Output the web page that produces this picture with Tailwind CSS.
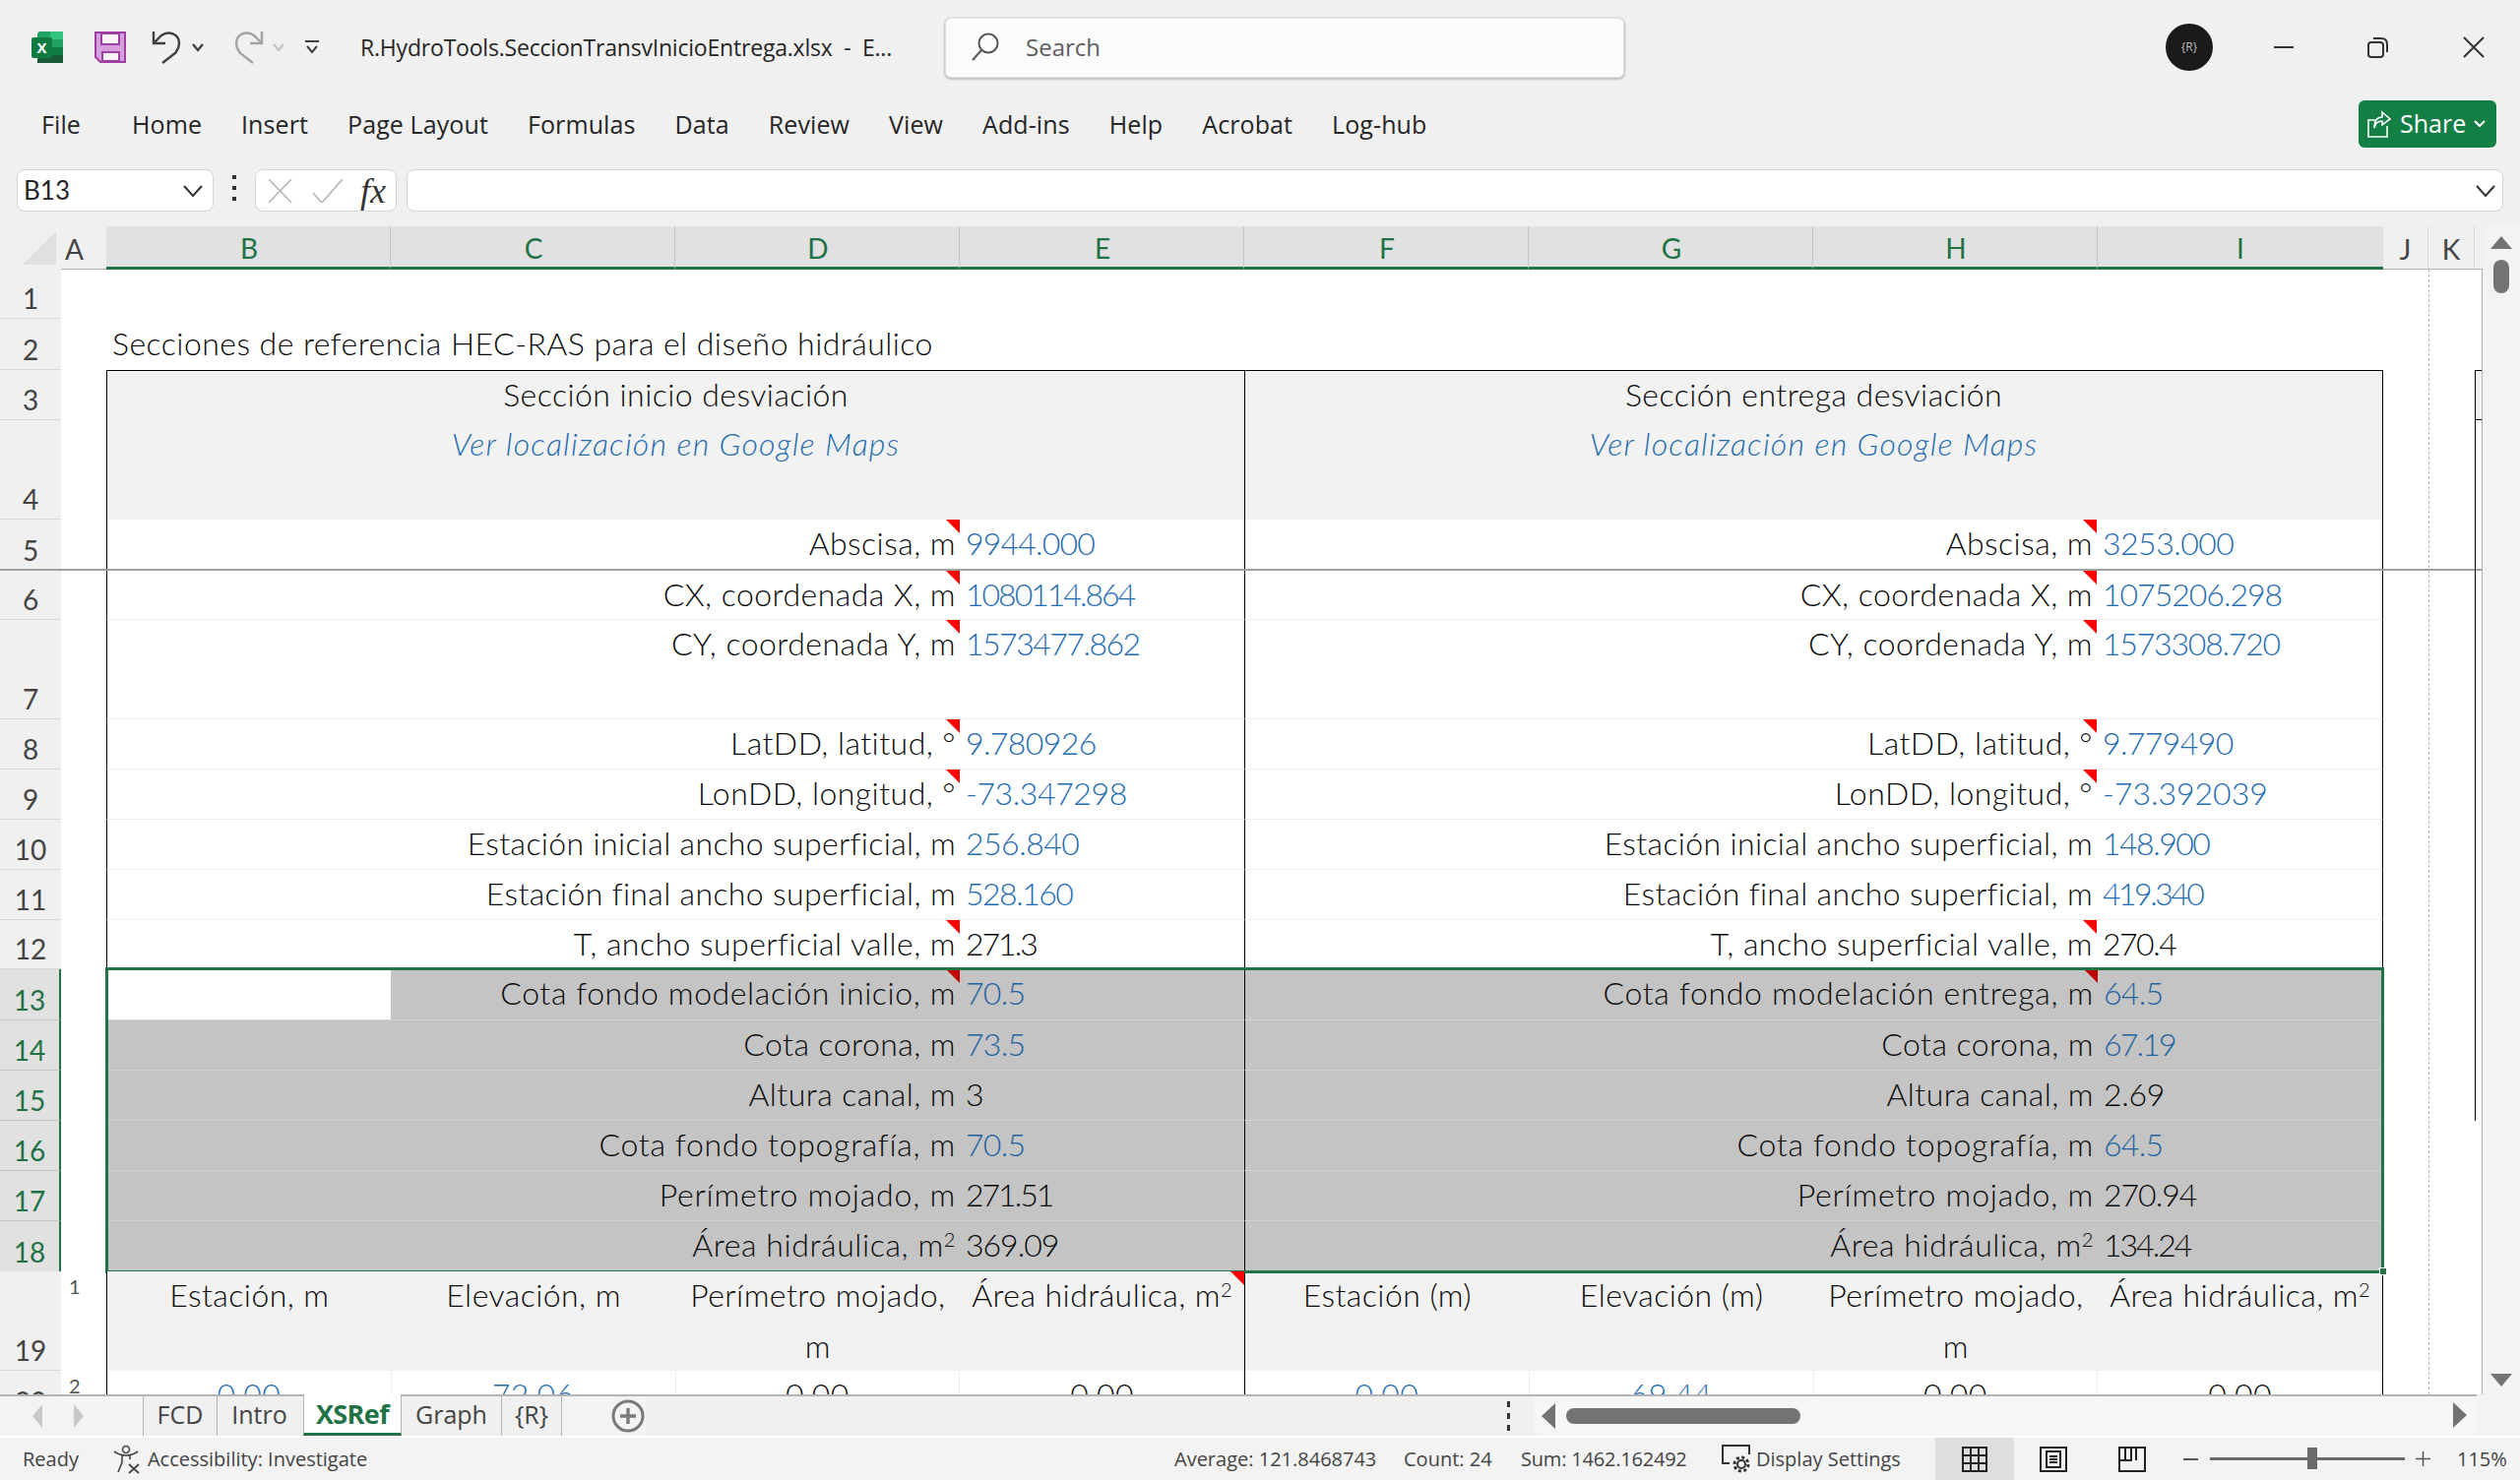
<!DOCTYPE html>
<html><head><meta charset="utf-8">
<script src="https://cdn.jsdelivr.net/npm/@tailwindcss/browser@4"></script>
</head>
<body class="w-[2560px] h-[1504px] overflow-hidden bg-[#f0f0f0] font-['Open_Sans',sans-serif] text-[#262626]">

<!-- Title bar -->
<div class="flex items-center h-[96px] relative">
  <svg class="ml-[32px]" width="32" height="32" viewBox="0 0 32 32"><path d="M9 0H29Q32 0 32 3V29Q32 32 29 32H9Q6 32 6 29V3Q6 0 9 0Z" fill="#21a366"/><rect x="19" y="0" width="13" height="8" fill="#33c481"/><rect x="6" y="16" width="13" height="8" fill="#107c41"/><rect x="19" y="8" width="13" height="8" fill="#21a366"/><rect x="19" y="16" width="13" height="8" fill="#107c41"/><rect x="6" y="24" width="26" height="8" fill="#185c37"/><rect x="0" y="6" width="21" height="21" rx="2" fill="#107c41"/><text x="10.5" y="22" font-size="15" font-weight="700" fill="#fff" text-anchor="middle" font-family="Open Sans">X</text></svg>
  <svg class="ml-[32px]" width="32" height="32" viewBox="0 0 32 32"><path d="M1 1H31V31H6L1 26Z" fill="#d79fdb" stroke="#9f3fa3" stroke-width="2"/><rect x="7" y="2" width="18" height="11" fill="#f9f2fa" stroke="#9f3fa3" stroke-width="2"/><rect x="8" y="21" width="17" height="9" fill="#f9f2fa" stroke="#9f3fa3" stroke-width="2"/></svg>
  <svg class="ml-[26px]" width="32" height="34" viewBox="0 0 32 34" fill="none" stroke="#404040" stroke-width="2.4"><path d="M2 1V13H14"/><path d="M2 13L10 5C17 0 28 3 28 13C28 18 26 20 24 23L11 33"/></svg>
  <svg class="ml-[8px]" width="14" height="10" viewBox="0 0 14 10" fill="none" stroke="#404040" stroke-width="2.4"><path d="M2 2L7 8L12 2"/></svg>
  <svg class="ml-[28px]" width="32" height="34" viewBox="0 0 32 34" fill="none" stroke="#a3a3a3" stroke-width="2.4"><path d="M30 1V13H18"/><path d="M30 13L22 5C15 0 4 3 4 13C4 18 6 20 8 23L21 33"/></svg>
  <svg class="ml-[8px]" width="14" height="10" viewBox="0 0 14 10" fill="none" stroke="#c4c4c4" stroke-width="2.4"><path d="M2 2L7 8L12 2"/></svg>
  <svg class="ml-[20px]" width="14" height="14" viewBox="0 0 14 14" fill="none" stroke="#404040" stroke-width="2"><path d="M0 1H14M2 6L7 12L12 6"/></svg>
  <div class="ml-[42px] w-[560px] text-[23px] tracking-[-0.2px] whitespace-pre">R.HydroTools.SeccionTransvInicioEntrega.xlsx  -  E...</div>
  <div class="ml-[34px] flex items-center w-[690px] h-[61px] bg-[#fbfbfb] rounded-[6px] border border-[#e0e0e0] shadow-[0_1px_2px_1px_rgba(0,0,0,0.2)]">
    <svg class="ml-[26px]" width="28" height="30" viewBox="0 0 28 30" fill="none" stroke="#555" stroke-width="2"><circle cx="17" cy="11" r="9.5"/><path d="M10 18L1 28"/></svg>
    <div class="ml-[27px] text-[24px] text-[#5e5e5e]">Search</div>
  </div>
  <div class="ml-[550px] flex items-center justify-center w-[48px] h-[48px] rounded-full bg-[#1a1a1a] text-[12px] text-[#bdbdbd]">{R}</div>
  <div class="ml-[62px] w-[20px] h-[2px] bg-[#333]"></div>
  <svg class="ml-[75px]" width="22" height="22" viewBox="0 0 22 22" fill="none" stroke="#333" stroke-width="2"><rect x="1" y="6" width="15" height="15" rx="3"/><path d="M6 2H14Q20 2 20 8V16"/></svg>
  <svg class="ml-[75px]" width="22" height="22" viewBox="0 0 22 22" fill="none" stroke="#333" stroke-width="2"><path d="M1 1L21 21M21 1L1 21"/></svg>
</div>

<!-- Menu -->
<div class="flex items-start h-[59px] pt-[4px] pl-[42px] text-[25px] tracking-[0.1px] relative">
  <div class="flex items-center gap-[40px] h-[54px]">
    <span class="mr-[12px]">File</span><span>Home</span><span>Insert</span><span>Page Layout</span><span>Formulas</span><span>Data</span><span>Review</span><span>View</span><span>Add-ins</span><span>Help</span><span>Acrobat</span><span>Log-hub</span>
  </div>
  <div class="absolute left-[2396px] top-[6px] flex items-center w-[140px] h-[48px] rounded-[6px] bg-[#137f45] text-white text-[25px] tracking-normal">
    <svg class="ml-[9px]" width="24" height="28" viewBox="0 0 24 28" fill="none" stroke="#fff" stroke-width="1.6"><path d="M8 10H1V27H20V16"/><path d="M15 2L23 9L15 15V11C11 11 8 13 7 18C7 11 10 7 15 7Z"/></svg>
    <span class="ml-[9px]">Share</span>
    <svg class="ml-[8px]" width="12" height="8" viewBox="0 0 12 8" fill="none" stroke="#fff" stroke-width="2"><path d="M1 1L6 6L11 1"/></svg>
  </div>
</div>

<!-- Formula bar -->
<div class="flex items-start h-[75px] pt-[17px]">
  <div class="ml-[17px] flex items-center w-[200px] h-[43px] bg-white border border-[#d4d4d4] rounded-[8px] font-['Lato',sans-serif] text-[26px]">
    <span class="ml-[6px] flex-1">B13</span>
    <svg class="mr-[10px]" width="20" height="12" viewBox="0 0 20 12" fill="none" stroke="#333" stroke-width="2"><path d="M1 1L10 11L19 1"/></svg>
  </div>
  <div class="ml-[19px] mt-[6px] flex flex-col gap-[7px]"><div class="w-[4px] h-[4px] bg-[#333]"></div><div class="w-[4px] h-[4px] bg-[#333]"></div><div class="w-[4px] h-[4px] bg-[#333]"></div></div>
  <div class="ml-[19px] flex items-center w-[144px] h-[43px] bg-white border border-[#d4d4d4] rounded-[8px]">
    <svg class="ml-[12px]" width="25" height="24" viewBox="0 0 25 24" fill="none" stroke="#b5b5b5" stroke-width="1.6"><path d="M1 0L24 24M24 0L1 24"/></svg>
    <svg class="ml-[20px]" width="32" height="24" viewBox="0 0 32 24" fill="none" stroke="#b5b5b5" stroke-width="1.6"><path d="M1 14L10 24L31 0"/></svg>
    <span class="ml-[17px] font-['Liberation_Serif',serif] italic text-[36px] text-[#333] leading-none">fx</span>
  </div>
  <div class="ml-[10px] flex items-center justify-end w-[2130px] h-[43px] bg-white border border-[#d4d4d4] rounded-[8px]">
    <svg class="mr-[7px]" width="20" height="12" viewBox="0 0 20 12" fill="none" stroke="#333" stroke-width="2"><path d="M1 1L10 11L19 1"/></svg>
  </div>
</div>

<!-- Sheet area -->
<div class="flex h-[1187px] font-['Lato',sans-serif] text-[32px] font-light tracking-[0.45px] text-[#0a0a0a]">
  <div class="w-[2522px] shrink-0 flex flex-col relative">
    <!-- Column headers -->
    <div class="flex h-[44px] shrink-0 font-normal text-[28px] tracking-normal">
      <div class="w-[62px] relative"><svg class="absolute left-[23px] top-[5px]" width="34" height="34" viewBox="0 0 34 34"><path d="M34 0V34H0Z" fill="#e0e0e0"/></svg></div>
      <div class="w-[46px] flex items-center pl-[4px] pt-[3px] text-[#444] border-b border-b-[#b0b0b0]">A</div>
      <div class="w-[289px] flex items-center justify-center pl-[2px] pt-[3px] bg-[#e1e1e1] text-[#217346] border-b-[3px] border-b-[#217346] border-r border-r-[#c4c4c4]">B</div>
      <div class="w-[289px] flex items-center justify-center pl-[2px] pt-[3px] bg-[#e1e1e1] text-[#217346] border-b-[3px] border-b-[#217346] border-r border-r-[#c4c4c4]">C</div>
      <div class="w-[289px] flex items-center justify-center pl-[2px] pt-[3px] bg-[#e1e1e1] text-[#217346] border-b-[3px] border-b-[#217346] border-r border-r-[#c4c4c4]">D</div>
      <div class="w-[289px] flex items-center justify-center pl-[2px] pt-[3px] bg-[#e1e1e1] text-[#217346] border-b-[3px] border-b-[#217346] border-r border-r-[#c4c4c4]">E</div>
      <div class="w-[289px] flex items-center justify-center pl-[2px] pt-[3px] bg-[#e1e1e1] text-[#217346] border-b-[3px] border-b-[#217346] border-r border-r-[#c4c4c4]">F</div>
      <div class="w-[289px] flex items-center justify-center pl-[2px] pt-[3px] bg-[#e1e1e1] text-[#217346] border-b-[3px] border-b-[#217346] border-r border-r-[#c4c4c4]">G</div>
      <div class="w-[289px] flex items-center justify-center pl-[2px] pt-[3px] bg-[#e1e1e1] text-[#217346] border-b-[3px] border-b-[#217346] border-r border-r-[#c4c4c4]">H</div>
      <div class="w-[290px] flex items-center justify-center pt-[3px] bg-[#e1e1e1] text-[#217346] border-b-[3px] border-b-[#217346]">I</div>
      <div class="w-[46px] flex items-center justify-center pt-[3px] text-[#444] border-r border-r-[#d8d8d8] border-b border-b-[#b0b0b0]">J</div>
      <div class="w-[47px] flex items-center justify-center pt-[3px] text-[#444] border-r border-r-[#d8d8d8] border-b border-b-[#b0b0b0]">K</div>
      <div class="w-[8px] border-b border-b-[#b0b0b0]"></div>
    </div>
    <!-- Rows -->
    <div class="h-[1143px] overflow-hidden bg-white border-r border-[#b0b0b0] leading-[48px] relative">
      <!-- page break -->
      <div class="absolute left-[2467px] top-0 bottom-0 w-0 border-l border-dashed border-[#b8b8b8]"></div>
      <!-- next block's edge, column L -->
      <div class="absolute left-[2514px] top-[102px] h-[763px] w-[7px] border-l border-black"></div>
      <div class="absolute left-[2515px] top-[102px] h-[51px] w-[6px] bg-[#f2f2f2] border-y border-black"></div>

      <div class="flex h-[50px]">
        <div class="w-[62px] shrink-0 bg-[#f0f0f0] border-b border-[#d8d8d8] flex items-end justify-center text-[28px] font-normal tracking-normal leading-[40px] text-[#444]">1</div>
      </div>
      <div class="flex h-[52px]">
        <div class="w-[62px] shrink-0 bg-[#f0f0f0] border-b border-[#d8d8d8] flex items-end justify-center text-[28px] font-normal tracking-normal leading-[40px] text-[#444]">2</div>
        <div class="w-[46px] shrink-0"></div>
        <div class="pl-[6px] whitespace-nowrap leading-[50px]">Secciones de referencia HEC-RAS para el diseño hidráulico</div>
      </div>
      <div class="flex h-[51px]">
        <div class="w-[62px] shrink-0 bg-[#f0f0f0] border-b border-[#d8d8d8] flex items-end justify-center text-[28px] font-normal tracking-normal leading-[40px] text-[#444]">3</div>
        <div class="w-[46px] shrink-0"></div>
        <div class="w-[1156px] shrink-0 text-center bg-[#f2f2f2] border-l border-t border-black">Sección inicio desviación</div>
        <div class="w-[1157px] shrink-0 text-center bg-[#f2f2f2] border-l border-t border-r border-black">Sección entrega desviación</div>
      </div>
      <div class="flex h-[101px]">
        <div class="w-[62px] shrink-0 bg-[#f0f0f0] border-b border-[#d8d8d8] flex items-end justify-center text-[28px] font-normal tracking-normal leading-[40px] text-[#444]">4</div>
        <div class="w-[46px] shrink-0"></div>
        <div class="w-[1156px] shrink-0 text-center bg-[#f2f2f2] border-l border-black italic tracking-[1.2px] text-[#1f6cb0]">Ver localización en Google Maps</div>
        <div class="w-[1157px] shrink-0 text-center bg-[#f2f2f2] border-l border-r border-black italic tracking-[1.2px] text-[#1f6cb0]">Ver localización en Google Maps</div>
      </div>

      <!-- row 5 -->
      <div class="flex h-[52px] border-b-2 border-[#a0a0a0] w-[2521px]">
        <div class="w-[62px] shrink-0 bg-[#f0f0f0] flex items-end justify-center text-[28px] font-normal tracking-normal leading-[38px] text-[#444]">5</div>
        <div class="w-[46px] shrink-0"></div>
        <div class="flex w-[1156px] shrink-0 border-l border-black">
          <div class="relative flex-1 text-right pr-[4px]">Abscisa, m<svg class="absolute right-0 top-0" width="14" height="14"><path d="M0 0H14V14Z" fill="#f00"/></svg></div>
          <div class="w-[289px] pl-[6px] text-[#1f6cb0] tracking-[-0.8px]">9944.000</div>
        </div>
        <div class="flex w-[1157px] shrink-0 border-l border-r border-black">
          <div class="relative flex-1 text-right pr-[4px]">Abscisa, m<svg class="absolute right-0 top-0" width="14" height="14"><path d="M0 0H14V14Z" fill="#f00"/></svg></div>
          <div class="w-[290px] pl-[6px] text-[#1f6cb0] tracking-[-0.5px]">3253.000</div>
        </div>
      </div>
      <!-- row 6 -->
      <div class="flex h-[50px]">
        <div class="w-[62px] shrink-0 bg-[#f0f0f0] border-b border-[#d8d8d8] flex items-end justify-center text-[28px] font-normal tracking-normal leading-[40px] text-[#444]">6</div>
        <div class="w-[46px] shrink-0"></div>
        <div class="flex w-[1156px] shrink-0 border-l border-b border-l-black border-b-[#eeeeee]">
          <div class="relative flex-1 text-right pr-[4px]">CX, coordenada X, m<svg class="absolute right-0 top-0" width="14" height="14"><path d="M0 0H14V14Z" fill="#f00"/></svg></div>
          <div class="w-[289px] pl-[6px] text-[#1f6cb0] tracking-[-2px]">1080114.864</div>
        </div>
        <div class="flex w-[1157px] shrink-0 border-l border-r border-b border-l-black border-r-black border-b-[#eeeeee]">
          <div class="relative flex-1 text-right pr-[4px]">CX, coordenada X, m<svg class="absolute right-0 top-0" width="14" height="14"><path d="M0 0H14V14Z" fill="#f00"/></svg></div>
          <div class="w-[290px] pl-[6px] text-[#1f6cb0] tracking-[-1px]">1075206.298</div>
        </div>
      </div>
      <!-- row 7 -->
      <div class="flex h-[101px]">
        <div class="w-[62px] shrink-0 bg-[#f0f0f0] border-b border-[#d8d8d8] flex items-end justify-center text-[28px] font-normal tracking-normal leading-[40px] text-[#444]">7</div>
        <div class="w-[46px] shrink-0"></div>
        <div class="flex w-[1156px] shrink-0 border-l border-b border-l-black border-b-[#eeeeee]">
          <div class="relative flex-1 text-right pr-[4px]">CY, coordenada Y, m<svg class="absolute right-0 top-0" width="14" height="14"><path d="M0 0H14V14Z" fill="#f00"/></svg></div>
          <div class="w-[289px] pl-[6px] text-[#1f6cb0] tracking-[-1.5px]">1573477.862</div>
        </div>
        <div class="flex w-[1157px] shrink-0 border-l border-r border-b border-l-black border-r-black border-b-[#eeeeee]">
          <div class="relative flex-1 text-right pr-[4px]">CY, coordenada Y, m<svg class="absolute right-0 top-0" width="14" height="14"><path d="M0 0H14V14Z" fill="#f00"/></svg></div>
          <div class="w-[290px] pl-[6px] text-[#1f6cb0] tracking-[-1.2px]">1573308.720</div>
        </div>
      </div>
      <!-- row 8 -->
      <div class="flex h-[51px]">
        <div class="w-[62px] shrink-0 bg-[#f0f0f0] border-b border-[#d8d8d8] flex items-end justify-center text-[28px] font-normal tracking-normal leading-[40px] text-[#444]">8</div>
        <div class="w-[46px] shrink-0"></div>
        <div class="flex w-[1156px] shrink-0 border-l border-b border-l-black border-b-[#eeeeee]">
          <div class="relative flex-1 text-right pr-[4px]">LatDD, latitud, °<svg class="absolute right-0 top-0" width="14" height="14"><path d="M0 0H14V14Z" fill="#f00"/></svg></div>
          <div class="w-[289px] pl-[6px] text-[#1f6cb0] tracking-[-0.6px]">9.780926</div>
        </div>
        <div class="flex w-[1157px] shrink-0 border-l border-r border-b border-l-black border-r-black border-b-[#eeeeee]">
          <div class="relative flex-1 text-right pr-[4px]">LatDD, latitud, °<svg class="absolute right-0 top-0" width="14" height="14"><path d="M0 0H14V14Z" fill="#f00"/></svg></div>
          <div class="w-[290px] pl-[6px] text-[#1f6cb0] tracking-[-0.6px]">9.779490</div>
        </div>
      </div>
      <!-- row 9 -->
      <div class="flex h-[51px]">
        <div class="w-[62px] shrink-0 bg-[#f0f0f0] border-b border-[#d8d8d8] flex items-end justify-center text-[28px] font-normal tracking-normal leading-[40px] text-[#444]">9</div>
        <div class="w-[46px] shrink-0"></div>
        <div class="flex w-[1156px] shrink-0 border-l border-b border-l-black border-b-[#eeeeee]">
          <div class="relative flex-1 text-right pr-[4px]">LonDD, longitud, °<svg class="absolute right-0 top-0" width="14" height="14"><path d="M0 0H14V14Z" fill="#f00"/></svg></div>
          <div class="w-[289px] pl-[6px] text-[#1f6cb0] tracking-[-0.4px]">-73.347298</div>
        </div>
        <div class="flex w-[1157px] shrink-0 border-l border-r border-b border-l-black border-r-black border-b-[#eeeeee]">
          <div class="relative flex-1 text-right pr-[4px]">LonDD, longitud, °<svg class="absolute right-0 top-0" width="14" height="14"><path d="M0 0H14V14Z" fill="#f00"/></svg></div>
          <div class="w-[290px] pl-[6px] text-[#1f6cb0] tracking-normal">-73.392039</div>
        </div>
      </div>
      <!-- row 10 -->
      <div class="flex h-[51px]">
        <div class="w-[62px] shrink-0 bg-[#f0f0f0] border-b border-[#d8d8d8] flex items-end justify-center text-[28px] font-normal tracking-normal leading-[40px] text-[#444]">10</div>
        <div class="w-[46px] shrink-0"></div>
        <div class="flex w-[1156px] shrink-0 border-l border-b border-l-black border-b-[#eeeeee]">
          <div class="flex-1 text-right pr-[4px] tracking-[0.35px]">Estación inicial ancho superficial, m</div>
          <div class="w-[289px] pl-[6px] text-[#1f6cb0] tracking-[-0.5px]">256.840</div>
        </div>
        <div class="flex w-[1157px] shrink-0 border-l border-r border-b border-l-black border-r-black border-b-[#eeeeee]">
          <div class="flex-1 text-right pr-[4px] tracking-[0.35px]">Estación inicial ancho superficial, m</div>
          <div class="w-[290px] pl-[6px] text-[#1f6cb0] tracking-[-1.5px]">148.900</div>
        </div>
      </div>
      <!-- row 11 -->
      <div class="flex h-[51px]">
        <div class="w-[62px] shrink-0 bg-[#f0f0f0] border-b border-[#d8d8d8] flex items-end justify-center text-[28px] font-normal tracking-normal leading-[40px] text-[#444]">11</div>
        <div class="w-[46px] shrink-0"></div>
        <div class="flex w-[1156px] shrink-0 border-l border-b border-l-black border-b-[#eeeeee]">
          <div class="flex-1 text-right pr-[4px] tracking-[0.35px]">Estación final ancho superficial, m</div>
          <div class="w-[289px] pl-[6px] text-[#1f6cb0] tracking-[-1.5px]">528.160</div>
        </div>
        <div class="flex w-[1157px] shrink-0 border-l border-r border-b border-l-black border-r-black border-b-[#eeeeee]">
          <div class="flex-1 text-right pr-[4px] tracking-[0.35px]">Estación final ancho superficial, m</div>
          <div class="w-[290px] pl-[6px] text-[#1f6cb0] tracking-[-2.5px]">419.340</div>
        </div>
      </div>
      <!-- row 12 -->
      <div class="flex h-[50px]">
        <div class="w-[62px] shrink-0 bg-[#f0f0f0] border-b border-[#d8d8d8] flex items-end justify-center text-[28px] font-normal tracking-normal leading-[40px] text-[#444]">12</div>
        <div class="w-[46px] shrink-0"></div>
        <div class="flex w-[1156px] shrink-0 border-l border-black">
          <div class="relative flex-1 text-right pr-[4px]">T, ancho superficial valle, m<svg class="absolute right-0 top-0" width="14" height="14"><path d="M0 0H14V14Z" fill="#f00"/></svg></div>
          <div class="w-[289px] pl-[6px] tracking-[-2px]">271.3</div>
        </div>
        <div class="flex w-[1157px] shrink-0 border-l border-r border-black">
          <div class="relative flex-1 text-right pr-[4px]">T, ancho superficial valle, m<svg class="absolute right-0 top-0" width="14" height="14"><path d="M0 0H14V14Z" fill="#f00"/></svg></div>
          <div class="w-[290px] pl-[6px] tracking-[-1.5px]">270.4</div>
        </div>
      </div>

      <!-- selection -->
      <div class="relative">
        <div class="flex h-[52px]">
          <div class="w-[62px] shrink-0 bg-[#e1e1e1] border-b border-b-[#c4c4c4] border-r-2 border-r-[#217346] flex items-end justify-center text-[28px] font-normal tracking-normal leading-[40px] text-[#217346]">13</div>
          <div class="w-[46px] shrink-0"></div>
          <div class="flex w-[1156px] shrink-0 bg-[#c4c4c4] border-b border-b-[#d0d0d0]">
            <div class="w-[289px] bg-white"></div>
            <div class="relative flex-1 text-right pr-[4px] tracking-[0.6px]">Cota fondo modelación inicio, m<svg class="absolute right-0 top-0" width="14" height="14"><path d="M0 0H14V14Z" fill="#c00000"/></svg></div>
            <div class="w-[289px] pl-[6px] text-[#1f63a0] tracking-[-0.7px]">70.5</div>
          </div>
          <div class="flex w-[1157px] shrink-0 bg-[#c4c4c4] border-l border-b border-l-black border-b-[#d0d0d0]">
            <div class="relative flex-1 text-right pr-[4px] tracking-[0.7px]">Cota fondo modelación entrega, m<svg class="absolute right-0 top-0" width="14" height="14"><path d="M0 0H14V14Z" fill="#c00000"/></svg></div>
            <div class="w-[290px] pl-[6px] text-[#1f63a0] tracking-[-0.7px]">64.5</div>
          </div>
        </div>
        <div class="flex h-[51px]">
          <div class="w-[62px] shrink-0 bg-[#e1e1e1] border-b border-b-[#c4c4c4] border-r-2 border-r-[#217346] flex items-end justify-center text-[28px] font-normal tracking-normal leading-[40px] text-[#217346]">14</div>
          <div class="w-[46px] shrink-0"></div>
          <div class="flex w-[1156px] shrink-0 bg-[#c4c4c4] border-b border-b-[#d0d0d0]">
            <div class="flex-1 text-right pr-[4px]">Cota corona, m</div>
            <div class="w-[289px] pl-[6px] text-[#1f63a0] tracking-[-0.7px]">73.5</div>
          </div>
          <div class="flex w-[1157px] shrink-0 bg-[#c4c4c4] border-l border-b border-l-black border-b-[#d0d0d0]">
            <div class="flex-1 text-right pr-[4px]">Cota corona, m</div>
            <div class="w-[290px] pl-[6px] text-[#1f63a0] tracking-[-1.8px]">67.19</div>
          </div>
        </div>
        <div class="flex h-[51px]">
          <div class="w-[62px] shrink-0 bg-[#e1e1e1] border-b border-b-[#c4c4c4] border-r-2 border-r-[#217346] flex items-end justify-center text-[28px] font-normal tracking-normal leading-[40px] text-[#217346]">15</div>
          <div class="w-[46px] shrink-0"></div>
          <div class="flex w-[1156px] shrink-0 bg-[#c4c4c4] border-b border-b-[#d0d0d0]">
            <div class="flex-1 text-right pr-[4px]">Altura canal, m</div>
            <div class="w-[289px] pl-[6px]">3</div>
          </div>
          <div class="flex w-[1157px] shrink-0 bg-[#c4c4c4] border-l border-b border-l-black border-b-[#d0d0d0]">
            <div class="flex-1 text-right pr-[4px]">Altura canal, m</div>
            <div class="w-[290px] pl-[6px] tracking-[-0.3px]">2.69</div>
          </div>
        </div>
        <div class="flex h-[51px]">
          <div class="w-[62px] shrink-0 bg-[#e1e1e1] border-b border-b-[#c4c4c4] border-r-2 border-r-[#217346] flex items-end justify-center text-[28px] font-normal tracking-normal leading-[40px] text-[#217346]">16</div>
          <div class="w-[46px] shrink-0"></div>
          <div class="flex w-[1156px] shrink-0 bg-[#c4c4c4] border-b border-b-[#d0d0d0]">
            <div class="flex-1 text-right pr-[4px] tracking-[0.7px]">Cota fondo topografía, m</div>
            <div class="w-[289px] pl-[6px] text-[#1f63a0] tracking-[-0.7px]">70.5</div>
          </div>
          <div class="flex w-[1157px] shrink-0 bg-[#c4c4c4] border-l border-b border-l-black border-b-[#d0d0d0]">
            <div class="flex-1 text-right pr-[4px] tracking-[0.7px]">Cota fondo topografía, m</div>
            <div class="w-[290px] pl-[6px] text-[#1f63a0] tracking-[-0.7px]">64.5</div>
          </div>
        </div>
        <div class="flex h-[51px]">
          <div class="w-[62px] shrink-0 bg-[#e1e1e1] border-b border-b-[#c4c4c4] border-r-2 border-r-[#217346] flex items-end justify-center text-[28px] font-normal tracking-normal leading-[40px] text-[#217346]">17</div>
          <div class="w-[46px] shrink-0"></div>
          <div class="flex w-[1156px] shrink-0 bg-[#c4c4c4] border-b border-b-[#d0d0d0]">
            <div class="flex-1 text-right pr-[4px] tracking-[0.8px]">Perímetro mojado, m</div>
            <div class="w-[289px] pl-[6px] tracking-[-2px]">271.51</div>
          </div>
          <div class="flex w-[1157px] shrink-0 bg-[#c4c4c4] border-l border-b border-l-black border-b-[#d0d0d0]">
            <div class="flex-1 text-right pr-[4px] tracking-[0.8px]">Perímetro mojado, m</div>
            <div class="w-[290px] pl-[6px] tracking-[-1px]">270.94</div>
          </div>
        </div>
        <div class="flex h-[51px]">
          <div class="w-[62px] shrink-0 bg-[#e1e1e1] border-r-2 border-r-[#217346] flex items-end justify-center text-[28px] font-normal tracking-normal leading-[40px] text-[#217346]">18</div>
          <div class="w-[46px] shrink-0"></div>
          <div class="flex w-[1156px] shrink-0 bg-[#c4c4c4]">
            <div class="flex-1 text-right pr-[4px] tracking-[0.6px]">Área hidráulica, m<sup class="text-[20px]">2</sup></div>
            <div class="w-[289px] pl-[6px] tracking-[-1px]">369.09</div>
          </div>
          <div class="flex w-[1157px] shrink-0 bg-[#c4c4c4] border-l border-l-black">
            <div class="flex-1 text-right pr-[4px] tracking-[0.6px]">Área hidráulica, m<sup class="text-[20px]">2</sup></div>
            <div class="w-[290px] pl-[6px] tracking-[-2px]">134.24</div>
          </div>
        </div>
        <div class="absolute left-[107px] -top-[2px] w-[2315px] h-[311px] border-[3px] border-[#217346]"></div>
        <div class="absolute left-[2417px] top-[303px] w-[8px] h-[8px] bg-[#217346] border border-white"></div>
      </div>

      <!-- row 19 -->
      <div class="flex h-[101px]">
        <div class="w-[62px] shrink-0 bg-[#f0f0f0] border-b border-[#d8d8d8] flex items-end justify-center text-[28px] font-normal tracking-normal leading-[40px] text-[#444]">19</div>
        <div class="w-[46px] shrink-0 pl-[8px] text-[20px] font-normal text-[#555] leading-[30px]">1</div>
        <div class="relative flex w-[1156px] shrink-0 bg-[#f2f2f2] border-l border-black text-center leading-[52px]">
          <div class="w-[289px] -mt-[2px]">Estación, m</div>
          <div class="w-[289px] -mt-[2px]">Elevación, m</div>
          <div class="w-[289px] -mt-[2px]">Perímetro mojado,<br>m</div>
          <div class="w-[289px] -mt-[2px] whitespace-nowrap">Área hidráulica, m<sup class="text-[20px]">2</sup></div>
          <svg class="absolute right-0 top-0" width="14" height="14"><path d="M0 0H14V14Z" fill="#f00"/></svg>
        </div>
        <div class="flex w-[1157px] shrink-0 bg-[#f2f2f2] border-l border-r border-black text-center leading-[52px]">
          <div class="w-[289px] -mt-[2px]">Estación (m)</div>
          <div class="w-[289px] -mt-[2px]">Elevación (m)</div>
          <div class="w-[289px] -mt-[2px]">Perímetro mojado,<br>m</div>
          <div class="w-[289px] -mt-[2px] whitespace-nowrap">Área hidráulica, m<sup class="text-[20px]">2</sup></div>
        </div>
      </div>
      <!-- row 20 -->
      <div class="flex h-[51px]">
        <div class="w-[62px] shrink-0 bg-[#f0f0f0] flex items-end justify-center text-[28px] font-normal tracking-normal leading-[40px] text-[#444]">20</div>
        <div class="w-[46px] shrink-0 pl-[8px] text-[20px] font-normal text-[#555] leading-[30px]">2</div>
        <div class="flex w-[1156px] shrink-0 border-l border-black text-center">
          <div class="w-[289px] border-r border-[#eeeeee] text-[#1f6cb0]">0.00</div>
          <div class="w-[289px] border-r border-[#eeeeee] text-[#1f6cb0]">72.06</div>
          <div class="w-[289px] border-r border-[#eeeeee]">0.00</div>
          <div class="w-[289px]">0.00</div>
        </div>
        <div class="flex w-[1157px] shrink-0 border-l border-r border-black text-center">
          <div class="w-[289px] border-r border-[#eeeeee] text-[#1f6cb0]">0.00</div>
          <div class="w-[289px] border-r border-[#eeeeee] text-[#1f6cb0]">69.44</div>
          <div class="w-[289px] border-r border-[#eeeeee]">0.00</div>
          <div class="w-[289px]">0.00</div>
        </div>
      </div>
    </div>
  </div>
  <!-- Vertical scrollbar -->
  <div class="flex-1 flex flex-col items-center bg-[#f3f3f3] relative">
    <svg class="mt-[10px]" width="22" height="13" viewBox="0 0 22 13"><path d="M11 0L22 13H0Z" fill="#737373"/></svg>
    <div class="mt-[11px] w-[16px] h-[34px] rounded-[8px] bg-[#737373]"></div>
    <svg class="absolute left-[8px] top-[1166px]" width="22" height="13" viewBox="0 0 22 13"><path d="M11 13L22 0H0Z" fill="#737373"/></svg>
  </div>
</div>

<!-- Sheet tabs -->
<div class="flex h-[42px] bg-[#f3f3f3] text-[25px] leading-[36px] text-[#444]">
  <div class="w-[145px] flex items-center border-t-2 border-[#b4b4b4]">
    <svg class="ml-[33px]" width="10" height="24" viewBox="0 0 10 24"><path d="M10 0V24L0 12Z" fill="#c8c8c8"/></svg>
    <svg class="ml-[32px]" width="10" height="24" viewBox="0 0 10 24"><path d="M0 0V24L10 12Z" fill="#c8c8c8"/></svg>
  </div>
  <div class="w-[76px] flex items-start justify-center bg-[#f0f0f0] border-t-2 border-t-[#b4b4b4] border-l border-r border-l-[#b4b4b4] border-r-[#b4b4b4]">FCD</div>
  <div class="w-[87px] flex items-start justify-center bg-[#f0f0f0] border-t-2 border-t-[#b4b4b4] pr-[2px]">Intro</div>
  <div class="w-[100px] flex items-start justify-center pt-[2px] bg-white text-[27px] font-bold text-[#217346] border-b-[3px] border-b-[#217346] border-x border-x-[#b4b4b4] tracking-[-0.6px]">XSRef</div>
  <div class="w-[102px] flex items-start justify-center bg-[#f0f0f0] border-t-2 border-t-[#b4b4b4] border-r border-r-[#b4b4b4]">Graph</div>
  <div class="w-[61px] flex items-start justify-center bg-[#f0f0f0] border-t-2 border-t-[#b4b4b4] border-r border-r-[#b4b4b4]">{R}</div>
  <div class="w-[86px] flex items-center justify-end border-t-2 border-[#b4b4b4]">
    <svg class="mr-[2px]" width="34" height="34" viewBox="0 0 34 34" fill="none" stroke="#7a7a7a"><circle cx="17" cy="17" r="15" stroke-width="3"/><path d="M17 9V25M9 17H25" stroke-width="3.4"/></svg>
  </div>
  <div class="w-[871px] bg-[#f0f0f0] border-t-2 border-[#b4b4b4]"></div>
  <div class="w-[8px] flex flex-col items-center justify-center gap-[6px] border-t-2 border-[#b4b4b4] bg-[#f0f0f0]"><div class="w-[3px] h-[6px] bg-[#333]"></div><div class="w-[3px] h-[6px] bg-[#333]"></div><div class="w-[3px] h-[6px] bg-[#333]"></div></div>
  <div class="w-[22px] bg-[#f0f0f0] border-t-2 border-[#b4b4b4]"></div>
  <div class="w-[958px] flex items-center border-t-2 border-[#b4b4b4] bg-[#f6f6f6] rounded-b-[12px] relative">
    <svg class="ml-[8px]" width="14" height="26" viewBox="0 0 14 26"><path d="M14 0V26L0 13Z" fill="#737373"/></svg>
    <div class="ml-[11px] w-[238px] h-[16px] rounded-[8px] bg-[#737373]"></div>
    <svg class="absolute right-[10px] top-[6px]" width="14" height="26" viewBox="0 0 14 26"><path d="M0 0V26L14 13Z" fill="#737373"/></svg>
  </div>
</div>
<div class="h-[2px] bg-white"></div>

<!-- Status bar -->
<div class="flex items-center h-[43px] bg-[#f3f3f3] text-[20px] text-[#444]">
  <div class="w-[1193px] flex items-center pl-[23px]">
    <span>Ready</span>
    <svg class="ml-[34px]" width="30" height="30" viewBox="0 0 30 30" fill="none" stroke="#444" stroke-width="1.6"><circle cx="14" cy="5" r="3.5"/><path d="M2 7C6 10 10 11 14 11C18 11 22 10 26 7M10 11V18L6 28M18 11V15"/><path d="M17 20L27 29M27 20L17 29" stroke-width="1.8"/></svg>
    <span class="ml-[6px]">Accessibility: Investigate</span>
  </div>
  <div class="w-[233px]">Average: 121.8468743</div>
  <div class="w-[119px]">Count: 24</div>
  <div class="w-[204px] tracking-[-0.2px]">Sum: 1462.162492</div>
  <div class="w-[217px] flex items-center">
    <svg width="30" height="30" viewBox="0 0 30 30" fill="none" stroke="#333" stroke-width="2"><path d="M8 19H1V1H28V10"/><circle cx="20" cy="20" r="4"/><circle cx="20" cy="20" r="7" stroke-dasharray="3 2.5" stroke-width="3"/></svg>
    <span class="ml-[5px]">Display Settings</span>
  </div>
  <div class="w-[80px] h-[43px] bg-[#dedede] flex items-center justify-center">
    <svg width="26" height="26" viewBox="0 0 26 26" fill="none" stroke="#222" stroke-width="2"><rect x="1" y="1" width="24" height="24"/><path d="M9 1V25M17 1V25M1 9H25M1 17H25"/></svg>
  </div>
  <div class="w-[80px] flex items-center justify-center">
    <svg width="28" height="26" viewBox="0 0 28 26" fill="none" stroke="#222" stroke-width="2"><rect x="1" y="1" width="26" height="24"/><rect x="7" y="5" width="14" height="16"/><path d="M10 10H18M10 13H18M10 16H18"/></svg>
  </div>
  <div class="w-[80px] flex items-center justify-center">
    <svg width="28" height="26" viewBox="0 0 28 26" fill="none" stroke="#222" stroke-width="2"><rect x="1" y="1" width="26" height="24"/><path d="M1 14H13V1M7 1V14M18 1V14"/></svg>
  </div>
  <div class="ml-[12px] w-[15px] h-[2px] bg-[#555]"></div>
  <div class="ml-[12px] w-[198px] h-[3px] bg-[#6a6a6a] relative">
    <div class="absolute left-[99px] -top-[10px] w-[10px] h-[22px] bg-[#6a6a6a]"></div>
  </div>
  <svg class="ml-[11px]" width="15" height="15" viewBox="0 0 15 15" stroke="#555" stroke-width="1.5"><path d="M0 7.5H15M7.5 0V15"/></svg>
  <div class="ml-[27px]">115%</div>
</div>

</body></html>
